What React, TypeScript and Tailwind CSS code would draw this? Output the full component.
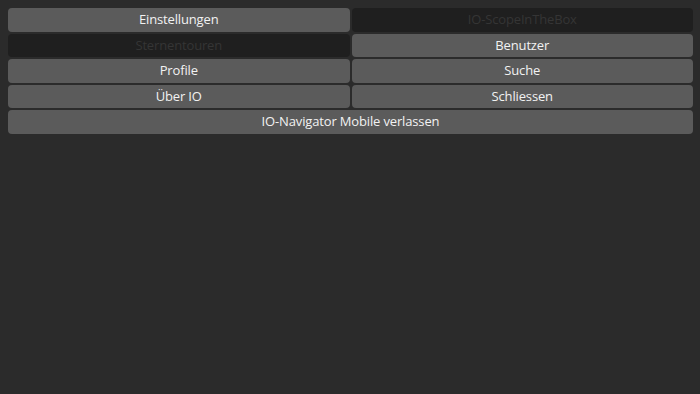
const buttons = [
  { label: "Einstellungen", disabled: false },
  { label: "IO-ScopeInTheBox", disabled: true },
  { label: "Sternentouren", disabled: true },
  { label: "Benutzer", disabled: false },
  { label: "Profile", disabled: false },
  { label: "Suche", disabled: false },
  { label: "Über IO", disabled: false },
  { label: "Schliessen", disabled: false },
];

function MenuButton({ label, disabled, wide }: { label: string; disabled?: boolean; wide?: boolean }) {
  return (
    <button
      disabled={disabled}
      className={`flex h-[23.5px] items-center justify-center rounded-[4px] text-[13px] leading-none tracking-[-0.15px] ${
        wide ? "col-span-2" : ""
      } ${disabled ? "bg-[#1f1f1f] text-[#353535]" : "bg-[#5b5b5b] text-[#f2f2f2]"}`}
    >
      {label}
    </button>
  );
}

export default function App() {
  return (
    <div
      className="h-[394px] w-[700px] bg-[#2b2b2b] pl-[8px] pr-[7px] pt-[8px]"
      style={{ fontFamily: '"Open Sans", "Noto Sans", sans-serif' }}
    >
      <div className="grid grid-cols-2 gap-x-[2px] gap-y-[2px]">
        {buttons.map((b) => (
          <MenuButton key={b.label} label={b.label} disabled={b.disabled} />
        ))}
        <MenuButton label="IO-Navigator Mobile verlassen" wide />
      </div>
    </div>
  );
}
